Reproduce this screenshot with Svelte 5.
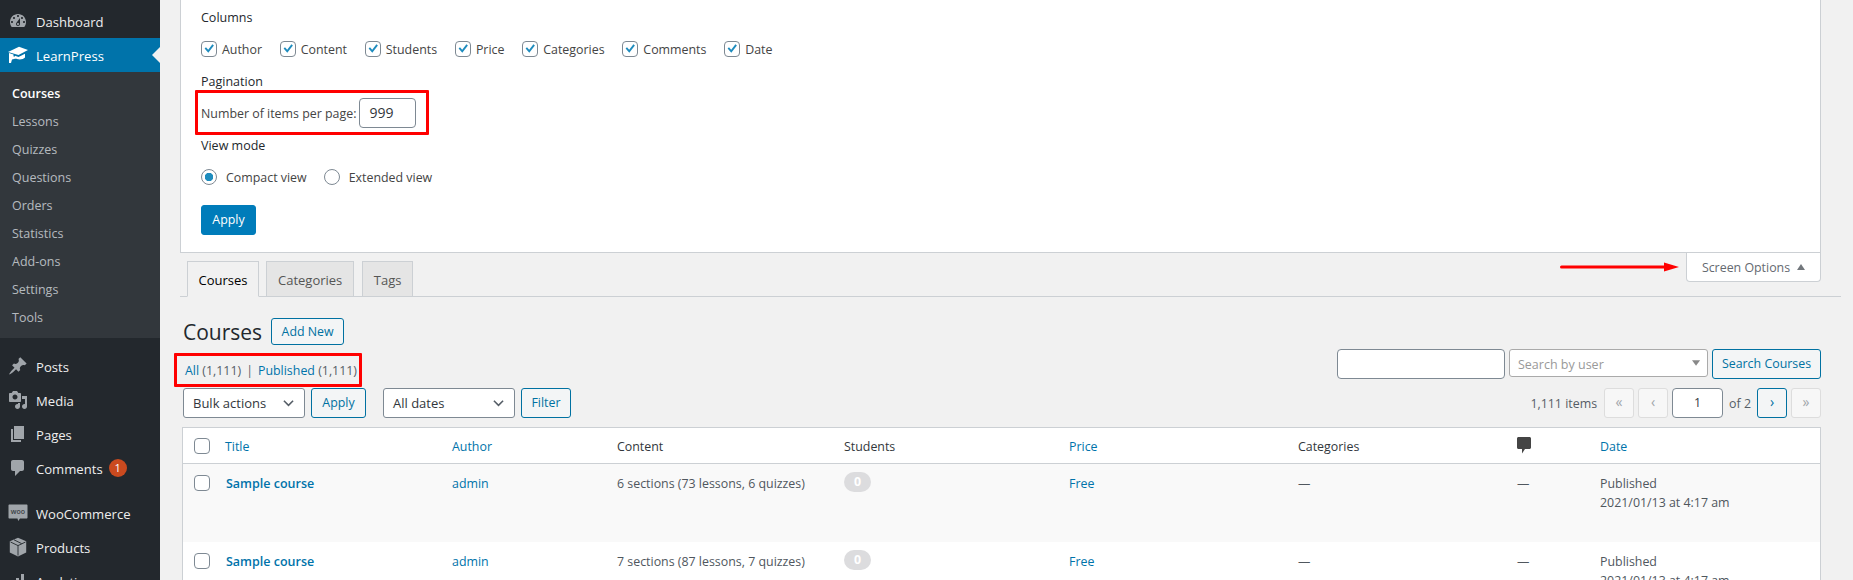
<script>
  const subItems = ["Courses", "Lessons", "Quizzes", "Questions", "Orders", "Statistics", "Add-ons", "Settings", "Tools"];
  const columns = ["Author", "Content", "Students", "Price", "Categories", "Comments", "Date"];
  const rows = [
    { content: "6 sections (73 lessons, 6 quizzes)" },
    { content: "7 sections (87 lessons, 7 quizzes)" }
  ];
</script>

{#snippet checkbox(checked)}
  <span class="cb">
    {#if checked}
      <svg viewBox="0 0 16 16" width="16" height="16"><path d="M3.600 7.600l1.400-1.300 2.200 2.400 4.200-5.400 1.500 1.200-5.600 7.300z" fill="#1e8cbe" /></svg>
    {/if}
  </span>
{/snippet}

{#snippet select(label, width)}
  <div class="select" style="width: {width}px">
    <span>{label}</span>
    <svg viewBox="0 0 12 8" width="11" height="8"><path d="M1 1.500l5 5 5-5" fill="none" stroke="#555d66" stroke-width="1.700" /></svg>
  </div>
{/snippet}

<div class="page">
  <nav class="sidebar">
    <ul class="menu first">
      <li>
        <svg class="ico" viewBox="0 0 20 20"><path d="M3.760 16h12.480C17.340 14.630 18 12.890 18 11c0-4.420-3.580-8-8-8s-8 3.580-8 8c0 1.890.66 3.630 1.760 5zM10 4c.55 0 1 .45 1 1s-.45 1-1 1-1-.45-1-1 .45-1 1-1zM6 6c.55 0 1 .45 1 1s-.45 1-1 1-1-.45-1-1 .45-1 1-1zm8 0c.55 0 1 .45 1 1s-.45 1-1 1-1-.45-1-1 .45-1 1-1zm-5.370 5.550L12 7v6c0 1.100-.9 2-2 2s-2-.9-2-2c0-.57.24-1.080.63-1.450zM4 10c.55 0 1 .45 1 1s-.45 1-1 1-1-.45-1-1 .45-1 1-1zm12 0c.55 0 1 .45 1 1s-.45 1-1 1-1-.45-1-1 .45-1 1-1zm-5 3c0-.55-.45-1-1-1s-1 .45-1 1 .45 1 1 1 1-.45 1-1z" /></svg>
        Dashboard
      </li>
      <li class="active">
        <svg class="ico" viewBox="0 0 20 20">
          <path d="M11 1.700L20 5l-9.500 5L0 7z" fill="#fff" />
          <path d="M7 10.700l3.500 1.300L17 8.800v3.700c-2 2.500-8 2.500-10 .5z" fill="#fff" />
          <path d="M1 8l4.500 1.500v2H8v2l-4 1-1 3.500H1z" fill="#fff" />
        </svg>
        LearnPress
      </li>
    </ul>
    <ul class="submenu">
      {#each subItems as item, i}
        <li class:current={i === 0}>{item}</li>
      {/each}
    </ul>
    <ul class="menu sep">
      <li>
        <svg class="ico" viewBox="0 0 20 20"><path d="M10.440 3.020l1.820-1.820 6.360 6.350-1.830 1.820c-1.050-.68-2.480-.57-3.410.36l-.75.75c-.92.93-1.040 2.350-.35 3.410l-1.830 1.820-2.410-2.410-2.800 2.790c-.42.42-3.380 2.710-3.800 2.290s1.860-3.390 2.280-3.810l2.790-2.790L4.100 9.360l1.830-1.820c1.050.69 2.480.57 3.400-.36l.75-.75c.93-.92 1.050-2.350.36-3.410z" /></svg>
        Posts
      </li>
      <li>
        <svg class="ico" viewBox="0 0 20 20"><path d="M13 11V4c0-.55-.45-1-1-1h-1.670L9 1H5L3.670 3H2c-.55 0-1 .45-1 1v7c0 .55.45 1 1 1h10c.55 0 1-.45 1-1zM7 4.500c1.380 0 2.500 1.120 2.500 2.500S8.380 9.500 7 9.500 4.500 8.380 4.500 7 5.620 4.500 7 4.500zM14 6h5v10.500c0 1.380-1.120 2.500-2.500 2.500S14 17.880 14 16.500s1.120-2.500 2.500-2.500c.17 0 .34.020.5.050V9h-3V6zm-4 8.050V13h2v3.500c0 1.380-1.120 2.500-2.500 2.500S7 17.880 7 16.500 8.120 14 9.500 14c.17 0 .34.020.5.050z" /></svg>
        Media
      </li>
      <li>
        <svg class="ico" viewBox="0 0 20 20"><path d="M6 15V2h10v13H6zm-1 1h8v2H3V5h2v11z" /></svg>
        Pages
      </li>
      <li>
        <svg class="ico" viewBox="0 0 20 20"><path d="M5 2h9c1.100 0 2 .9 2 2v7c0 1.100-.9 2-2 2h-2l-5 5v-5H5c-1.100 0-2-.9-2-2V4c0-1.100.9-2 2-2z" /></svg>
        Comments <span class="bubble">1</span>
      </li>
    </ul>
    <ul class="menu sep">
      <li>
        <svg class="ico" viewBox="0 0 20 20">
          <path d="M1.500 1.500h17c.6 0 1 .4 1 1v12c0 .6-.4 1-1 1H12l-1.800 2.500L9.500 15.500h-8c-.6 0-1-.4-1-1v-12c0-.6.4-1 1-1z" />
          <text x="10" y="11" text-anchor="middle" class="woo">woo</text>
        </svg>
        WooCommerce
      </li>
      <li>
        <svg class="ico" viewBox="0 0 20 20">
          <path d="M10 .8l8.200 3.400v11.300L10 19.500l-8.200-4V4.200z" />
          <path d="M2.500 5L10 8.600v10M10 8.600L17.500 5M6 2.800l7.600 3.800" fill="none" stroke="#23282d" stroke-width=".9" />
        </svg>
        Products
      </li>
      <li>
        <svg class="ico" viewBox="0 0 20 20"><path d="M3 12h3v6H3zM8 7h3v11H8zM13 3h3v15h-3z" /></svg>
        Analytics
      </li>
    </ul>
  </nav>

  <main class="main">
    <section class="panel">
      <h5>Columns</h5>
      <div class="checks">
        {#each columns as col}
          <label>{@render checkbox(true)}<span class="t">{col}</span></label>
        {/each}
      </div>
      <h5 class="pag">Pagination</h5>
      <div class="per-page">
        <span class="t">Number of items per page:</span>
        <div class="input num">999</div>
      </div>
      <h5 class="mode">View mode</h5>
      <div class="radios">
        <label><span class="radio on"></span><span class="t">Compact view</span></label>
        <label><span class="radio"></span><span class="t">Extended view</span></label>
      </div>
      <button class="btn primary">Apply</button>
    </section>

    <div class="tabbar">
      <div class="tab active">Courses</div>
      <div class="tab wide">Categories</div>
      <div class="tab">Tags</div>
      <div class="meta"><span class="t">Screen Options</span> <i class="up"></i></div>
    </div>

    <div class="wrap">
      <div class="top">
        <div>
          <div class="title">
            <h1>Courses</h1>
            <button class="btn add">Add New</button>
          </div>
          <p class="views"><a href="#all">All</a> (1,111)<span class="bar">|</span><a href="#pub">Published</a> (1,111)</p>
        </div>
        <div class="search">
          <div class="input txt"></div>
          <div class="select user">
            <span>Search by user</span>
            <svg viewBox="0 0 10 6" width="9" height="6"><path d="M0 0h9L4.500 6z" fill="#888" /></svg>
          </div>
          <button class="btn sec search-btn">Search Courses</button>
        </div>
      </div>

      <div class="tablenav">
        <div class="actions">
          {@render select("Bulk actions", 122)}
          <button class="btn sec apply">Apply</button>
          <span class="spacer"></span>
          {@render select("All dates", 132)}
          <button class="btn sec filter">Filter</button>
        </div>
        <div class="paging">
          <span class="count t">1,111 items</span>
          <span class="pg off">«</span>
          <span class="pg off">‹</span>
          <div class="input cur">1</div>
          <span class="of t">of 2</span>
          <span class="pg next">›</span>
          <span class="pg off">»</span>
        </div>
      </div>

      <table>
        <colgroup>
          <col style="width: 32px" /><col style="width: 227px" /><col style="width: 165px" /><col style="width: 227px" />
          <col style="width: 225px" /><col style="width: 229px" /><col style="width: 219px" /><col style="width: 83px" /><col />
        </colgroup>
        <thead>
          <tr>
            <th class="cbcol">{@render checkbox(false)}</th>
            <th class="link">Title</th>
            <th class="link">Author</th>
            <th>Content</th>
            <th>Students</th>
            <th class="link">Price</th>
            <th>Categories</th>
            <th class="icon">
              <svg class="cmt" viewBox="0 0 14 17" width="14" height="17"><path d="M1.500 0h11c.8 0 1.500.7 1.500 1.500v9c0 .8-.7 1.500-1.500 1.500H8l-3 4.500V12H1.500C.7 12 0 11.300 0 10.500v-9C0 .7.700 0 1.500 0z" /></svg>
            </th>
            <th class="link">Date</th>
          </tr>
        </thead>
        <tbody>
          {#each rows as row, i}
            <tr class:alt={i === 0}>
              <td class="cbcol">{@render checkbox(false)}</td>
              <td class="name"><a href="#c">Sample course</a></td>
              <td><a href="#u">admin</a></td>
              <td>{row.content}</td>
              <td><span class="badge">0</span></td>
              <td><a href="#p">Free</a></td>
              <td>—</td>
              <td>—</td>
              <td>Published<br />2021/01/13 at 4:17 am</td>
            </tr>
          {/each}
        </tbody>
      </table>
    </div>
  </main>

  <div class="mark one"></div>
  <div class="mark two"></div>
  <svg class="arrow" viewBox="0 0 120 10" width="120" height="10">
    <path d="M1.500 3.500h103v3H1.500a1.500 1.500 0 0 1 0-3z M104 .5L119 5l-15 4.500z" fill="#f00" />
  </svg>
</div>

<style>
  :global(body) {
    margin: 0;
    background: #f1f1f1;
    overflow: hidden;
  }
  .page {
    position: relative;
    display: grid;
    grid-template-columns: 160px 1fr;
    height: 580px;
    overflow: hidden;
    font-family: "Open Sans", "Noto Sans", sans-serif;
    font-size: 12.4px;
    line-height: 18px;
    color: #444;
  }
  ul {
    list-style: none;
    margin: 0;
    padding: 0;
  }
  /* Open Sans sits a pixel higher than the original face */
  .t {
    padding-top: 2px;
  }

  /* sidebar */
  .sidebar {
    background: #23282d;
    color: #eee;
  }
  .menu.first {
    padding-top: 4px;
  }
  .menu.sep {
    padding-top: 11px;
  }
  .menu li {
    box-sizing: border-box;
    position: relative;
    display: flex;
    align-items: center;
    height: 34px;
    padding: 2px 0 0 36px;
    font-size: 13.1px;
  }
  .ico {
    position: absolute;
    left: 8px;
    top: 7px;
    width: 20px;
    height: 20px;
    fill: #a0a5aa;
  }
  .woo {
    font-family: "Open Sans", sans-serif;
    font-size: 7px;
    font-weight: 600;
    fill: #3a3f44;
  }
  .menu li.active {
    background: #0073aa;
    color: #fff;
  }
  .menu li.active::after {
    content: "";
    position: absolute;
    right: 0;
    top: 9px;
    border: 8px solid transparent;
    border-right-color: #f1f1f1;
    border-left-width: 0;
  }
  .submenu {
    background: #32373c;
    padding: 7px 0;
  }
  .submenu li {
    height: 28px;
    line-height: 30px;
    padding-left: 12px;
    font-size: 12.5px;
    color: rgba(240, 245, 250, 0.7);
  }
  .submenu li.current {
    color: #fff;
    font-weight: 600;
  }
  .bubble {
    width: 18px;
    height: 18px;
    margin: -2px 0 0 6px;
    border-radius: 50%;
    background: #ca4a1f;
    color: #fff;
    font-size: 11px;
    line-height: 18px;
    text-align: center;
  }

  /* screen options */
  .main {
    min-width: 0;
  }
  .panel {
    box-sizing: border-box;
    height: 253px;
    margin: 0 32px 0 20px;
    padding: 9px 20px 0;
    background: #fff;
    border: 1px solid #ccd0d4;
    border-top: 0;
  }
  h5 {
    margin: 0;
    font-size: 12.5px;
    font-weight: 500;
    color: #23282d;
  }
  .checks {
    display: flex;
    gap: 17.8px;
    margin-top: 14px;
    height: 16px;
    align-items: center;
  }
  .checks label {
    display: flex;
    align-items: center;
    gap: 5px;
  }
  .cb {
    box-sizing: border-box;
    display: block;
    flex: none;
    width: 16px;
    height: 16px;
    background: #fff;
    border: 1px solid #7e8993;
    border-radius: 4px;
  }
  .cb svg {
    display: block;
    margin: -1px;
  }
  .pag {
    margin-top: 16px;
  }
  .per-page {
    display: flex;
    align-items: center;
    gap: 3px;
    margin-top: 7px;
    height: 30px;
  }
  .input {
    box-sizing: border-box;
    background: #fff;
    border: 1px solid #7e8993;
    border-radius: 4px;
    height: 30px;
  }
  .num {
    width: 57px;
    padding-left: 9px;
    line-height: 28px;
    font-size: 14px;
    color: #32373c;
  }
  .mode {
    margin-top: 9px;
  }
  .radios {
    display: flex;
    gap: 17px;
    margin-top: 14px;
    height: 16px;
    align-items: center;
  }
  .radios label {
    display: flex;
    align-items: center;
    gap: 9px;
  }
  .radio {
    box-sizing: border-box;
    width: 16px;
    height: 16px;
    border: 1px solid #7e8993;
    border-radius: 50%;
    background: #fff;
  }
  .radio.on {
    background: radial-gradient(circle, #1e8cbe 0 4px, #fff 4.5px);
  }
  .btn {
    box-sizing: border-box;
    display: block;
    height: 30px;
    padding: 0;
    font: inherit;
    border-radius: 3px;
    border: 1px solid #0071a1;
    background: #f3f5f6;
    color: #0071a1;
    text-align: center;
  }
  .primary {
    width: 55px;
    margin-top: 20px;
    background: #007cba;
    border-color: #007cba;
    color: #fff;
  }

  /* tabs */
  .tabbar {
    box-sizing: border-box;
    display: flex;
    align-items: flex-start;
    height: 44px;
    margin: 0 12px 0 20px;
    padding-left: 7px;
    border-bottom: 1px solid #ccd0d4;
  }
  .tab {
    box-sizing: border-box;
    height: 36px;
    margin: 8px 7px 0 0;
    padding: 0 10.5px;
    line-height: 36px;
    font-size: 13px;
    font-weight: 500;
    background: #e5e5e5;
    color: #555;
    border: 1px solid #ccd0d4;
  }
  .tab.wide {
    margin-right: 8px;
    padding: 0 11px;
  }
  .tab.active {
    background: #f1f1f1;
    color: #000;
    border-bottom-color: #f1f1f1;
  }
  .meta {
    box-sizing: border-box;
    display: flex;
    align-items: center;
    justify-content: center;
    gap: 7px;
    width: 135px;
    height: 29px;
    margin: 0 20px 0 auto;
    background: #fff;
    border: 1px solid #ccd0d4;
    border-top: 0;
    border-radius: 0 0 4px 4px;
    color: #646970;
  }
  .up {
    border: 4px solid transparent;
    border-top: 0;
    border-bottom: 6px solid #72777c;
  }

  /* list */
  .wrap {
    margin: 0 32px 0 23px;
  }
  .top {
    display: flex;
    justify-content: space-between;
    align-items: flex-end;
    padding-top: 21px;
  }
  .title {
    display: flex;
    align-items: center;
    height: 27px;
    gap: 9px;
  }
  h1 {
    margin: 0;
    font-size: 21px;
    font-weight: 400;
    color: #23282d;
  }
  .add {
    width: 73px;
    height: 27px;
  }
  .views {
    height: 18px;
    margin: 16px 0 0;
    padding-left: 2px;
    line-height: 20px;
    color: #555d66;
  }
  .bar {
    margin: 0 5px;
  }
  a {
    color: #0073aa;
    text-decoration: none;
  }
  .search {
    display: flex;
    gap: 4px;
    align-items: flex-start;
  }
  .txt {
    width: 168px;
  }
  .select {
    box-sizing: border-box;
    display: flex;
    align-items: center;
    justify-content: space-between;
    height: 30px;
    padding: 0 10px 0 9px;
    background: #fff;
    border: 1px solid #7e8993;
    border-radius: 3px;
    color: #32373c;
    font-size: 13px;
  }
  .user {
    width: 199px;
    height: 28px;
    padding: 0 6px 0 8px;
    border-color: #aaa;
    color: #999;
    font-size: 12.5px;
  }
  .user span {
    padding-top: 3px;
  }
  .search-btn {
    width: 109px;
  }
  .tablenav {
    display: flex;
    justify-content: space-between;
    margin-top: 9px;
    height: 30px;
  }
  .actions {
    display: flex;
    gap: 6px;
  }
  .apply {
    width: 55px;
  }
  .spacer {
    width: 5px;
  }
  .filter {
    width: 50px;
  }
  .paging {
    display: flex;
    align-items: center;
    gap: 4px;
    color: #555d66;
  }
  .count {
    margin-right: 3px;
  }
  .pg {
    box-sizing: border-box;
    width: 30px;
    height: 30px;
    border: 1px solid #0071a1;
    border-radius: 3px;
    background: #f3f5f6;
    color: #0071a1;
    text-align: center;
    line-height: 26px;
    font-size: 14px;
  }
  .pg.off {
    border-color: #ddd;
    background: #f7f7f7;
    color: #a0a5aa;
  }
  .cur {
    width: 51px;
    text-align: center;
    line-height: 28px;
    color: #32373c;
  }
  .of {
    margin: 0 2px;
  }

  /* table */
  table {
    width: 1639px;
    margin: 9px 0 0 -1px;
    table-layout: fixed;
    border-collapse: separate;
    border-spacing: 0;
    background: #fff;
    border: 1px solid #ccd0d4;
  }
  th {
    box-sizing: border-box;
    height: 36px;
    padding: 2px 10px 0;
    text-align: left;
    font-weight: 400;
    color: #32373c;
    border-bottom: 1px solid #ccd0d4;
  }
  th.link {
    color: #0073aa;
  }
  th.cbcol {
    padding: 0 0 0 11px;
  }
  th.icon {
    padding-top: 0;
  }
  td {
    height: 78px;
    box-sizing: border-box;
    padding: 10px;
    line-height: 19px;
    vertical-align: top;
    color: #50575e;
  }
  td.cbcol {
    padding: 11px 0 0 11px;
  }
  tr.alt td {
    background: #f9f9f9;
  }
  td.name {
    padding-left: 11px;
    font-size: 12.5px;
    font-weight: 600;
  }
  .badge {
    display: inline-block;
    width: 27px;
    height: 20px;
    margin-top: -2px;
    border-radius: 10px;
    background: #dcdcde;
    color: #fff;
    font-weight: 700;
    line-height: 20px;
    text-align: center;
    vertical-align: top;
  }
  .cmt {
    display: block;
    fill: #444;
  }

  /* annotations drawn over the page */
  .mark {
    position: absolute;
    box-sizing: border-box;
    border: 3px solid #f00;
    border-radius: 1px;
  }
  .one {
    left: 195px;
    top: 90px;
    width: 234px;
    height: 45px;
  }
  .two {
    left: 174px;
    top: 353px;
    width: 188px;
    height: 34px;
  }
  .arrow {
    position: absolute;
    left: 1560px;
    top: 262px;
  }
</style>
